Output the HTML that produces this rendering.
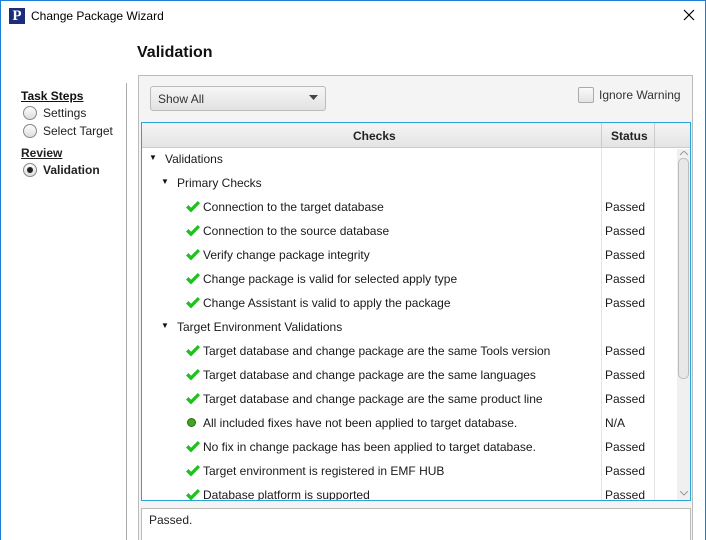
<!DOCTYPE html>
<html><head><meta charset="utf-8"><style>
*{margin:0;padding:0;box-sizing:border-box}
html,body{width:706px;height:540px;overflow:hidden}
body{background:#fff;font-family:"Liberation Sans",sans-serif;position:relative;color:#222}
.a{position:absolute}
.t{font-size:12px;white-space:nowrap}
.row{position:absolute;height:24px;line-height:24px;font-size:12px;white-space:nowrap;color:#1a1a1a}
.st{position:absolute;left:605px;font-size:12px;line-height:24px;color:#1a1a1a}
.radio{position:absolute;width:14px;height:14px;border:1px solid #888;border-radius:50%;background:linear-gradient(#fdfdfd,#ddd)}
.tri{position:absolute;font-size:8px;line-height:24px;color:#111}
</style></head><body>
<div class="a" style="left:0;top:0;width:706px;height:540px;border:1px solid #1c7fd6;border-bottom:none"></div>
<div class="a" style="left:9px;top:8px;width:16px;height:16px;background:#1b2d7a;color:#fff;font-family:'Liberation Serif',serif;font-weight:bold;font-size:15px;line-height:16px;text-align:center">P</div>
<div class="a t" style="left:31px;top:9px;font-size:12px;color:#000">Change Package Wizard</div>
<svg class="a" style="left:683px;top:9px" width="12" height="12"><path d="M1 1L11 11M11 1L1 11" stroke="#000" stroke-width="1.2"/></svg>
<div class="a" style="left:137px;top:44px;font-weight:bold;font-size:16px;color:#111">Validation</div>
<div class="a t" style="left:21px;top:89px;font-weight:bold;text-decoration:underline;font-size:12px;color:#111">Task Steps</div>
<div class="radio" style="left:23px;top:106px"></div><div class="a t" style="left:43px;top:106px">Settings</div>
<div class="radio" style="left:23px;top:124px"></div><div class="a t" style="left:43px;top:124px">Select Target</div>
<div class="a t" style="left:21px;top:146px;font-weight:bold;text-decoration:underline">Review</div>
<div class="radio" style="left:23px;top:163px"><div class="a" style="left:3px;top:3px;width:6px;height:6px;border-radius:50%;background:#222"></div></div>
<div class="a t" style="left:43px;top:163px;font-weight:bold">Validation</div>
<div class="a" style="left:126px;top:83px;width:1px;height:457px;background:#aaa"></div>
<div class="a" style="left:138px;top:75px;width:555px;height:470px;background:#f4f4f4;border:1px solid #bbb"></div>
<div class="a" style="left:150px;top:86px;width:176px;height:25px;border:1px solid #bbb;border-radius:3px;background:linear-gradient(#f6f6f6,#e2e2e2)"></div>
<div class="a t" style="left:158px;top:92px;color:#333">Show All</div>
<svg class="a" style="left:309px;top:95px" width="9" height="5"><path d="M0 0H9L4.5 5Z" fill="#444"/></svg>
<div class="a" style="left:578px;top:87px;width:16px;height:16px;border:1px solid #aaa;border-radius:2px;background:linear-gradient(#fafafa,#e4e4e4)"></div>
<div class="a t" style="left:599px;top:88px;color:#333">Ignore Warning</div>
<div class="a" style="left:141px;top:122px;width:550px;height:379px;border:1px solid #2aa3d8;background:#fff;overflow:hidden">
 <div class="a" style="left:0;top:0;width:548px;height:25px;background:linear-gradient(#f4f4f4,#e4e4e4);border-bottom:1px solid #ccc"></div>
 <div class="a t" style="left:211px;top:6px;font-weight:bold">Checks</div>
 <div class="a t" style="left:469px;top:6px;font-weight:bold">Status</div>
 <div class="a" style="left:459px;top:0;width:1px;height:379px;background:#e4e4e4"></div>
 <div class="a" style="left:512px;top:0;width:1px;height:379px;background:#e4e4e4"></div>
 <div class="a" style="left:459px;top:0;width:1px;height:25px;background:#ccc"></div>
 <div class="a" style="left:512px;top:0;width:1px;height:25px;background:#ccc"></div>
 <div class="a" style="left:535px;top:26px;width:13px;height:352px;background:#f0f0f0"></div>
 <div class="a" style="left:536px;top:35px;width:11px;height:221px;border:1px solid #bbb;border-radius:5px;background:#e8e8e8"></div>
 <svg class="a" style="left:538px;top:28px" width="8" height="5"><path d="M0 4L4 0L8 4" stroke="#999" fill="none"/></svg>
 <svg class="a" style="left:538px;top:368px" width="8" height="5"><path d="M0 0L4 4L8 0" stroke="#999" fill="none"/></svg>
</div>
<svg width="0" height="0" style="position:absolute"><defs><symbol id="ck" viewBox="0 0 14 12"><path d="M0 6.5L2.5 4L5 6.8L11.8 0L14 2.2L5 11.5Z" fill="#1ec21e"/></symbol></defs></svg>
<div class="tri" style="left:149px;top:146px">▼</div><div class="row" style="left:165px;top:147px">Validations</div>
<div class="tri" style="left:161px;top:170px">▼</div><div class="row" style="left:177px;top:171px">Primary Checks</div>
<div class="tri" style="left:161px;top:314px">▼</div><div class="row" style="left:177px;top:315px">Target Environment Validations</div>
<svg class="a" style="left:186px;top:201px" width="14" height="12"><use href="#ck"/></svg><div class="row" style="left:203px;top:195px">Connection to the target database</div><div class="st" style="top:195px">Passed</div>
<svg class="a" style="left:186px;top:225px" width="14" height="12"><use href="#ck"/></svg><div class="row" style="left:203px;top:219px">Connection to the source database</div><div class="st" style="top:219px">Passed</div>
<svg class="a" style="left:186px;top:249px" width="14" height="12"><use href="#ck"/></svg><div class="row" style="left:203px;top:243px">Verify change package integrity</div><div class="st" style="top:243px">Passed</div>
<svg class="a" style="left:186px;top:273px" width="14" height="12"><use href="#ck"/></svg><div class="row" style="left:203px;top:267px">Change package is valid for selected apply type</div><div class="st" style="top:267px">Passed</div>
<svg class="a" style="left:186px;top:297px" width="14" height="12"><use href="#ck"/></svg><div class="row" style="left:203px;top:291px">Change Assistant is valid to apply the package</div><div class="st" style="top:291px">Passed</div>
<svg class="a" style="left:186px;top:345px" width="14" height="12"><use href="#ck"/></svg><div class="row" style="left:203px;top:339px">Target database and change package are the same Tools version</div><div class="st" style="top:339px">Passed</div>
<svg class="a" style="left:186px;top:369px" width="14" height="12"><use href="#ck"/></svg><div class="row" style="left:203px;top:363px">Target database and change package are the same languages</div><div class="st" style="top:363px">Passed</div>
<svg class="a" style="left:186px;top:393px" width="14" height="12"><use href="#ck"/></svg><div class="row" style="left:203px;top:387px">Target database and change package are the same product line</div><div class="st" style="top:387px">Passed</div>
<div class="a" style="left:187px;top:418px;width:9px;height:9px;border-radius:50%;background:#3da81e;border:1px solid #2a6a10"></div><div class="row" style="left:203px;top:411px">All included fixes have not been applied to target database.</div><div class="st" style="top:411px">N/A</div>
<svg class="a" style="left:186px;top:441px" width="14" height="12"><use href="#ck"/></svg><div class="row" style="left:203px;top:435px">No fix in change package has been applied to target database.</div><div class="st" style="top:435px">Passed</div>
<svg class="a" style="left:186px;top:465px" width="14" height="12"><use href="#ck"/></svg><div class="row" style="left:203px;top:459px">Target environment is registered in EMF HUB</div><div class="st" style="top:459px">Passed</div>
<div class="a" style="left:142px;top:483px;width:459px;height:17px;overflow:hidden">
<svg class="a" style="left:44px;top:6px" width="14" height="12"><use href="#ck"/></svg><div class="row" style="left:61px;top:0px">Database platform is supported</div></div>
<div class="a" style="left:601px;top:483px;width:52px;height:17px;overflow:hidden"><div class="st" style="left:4px;top:0">Passed</div></div>
<div class="a" style="left:141px;top:508px;width:550px;height:40px;background:#fff;border:1px solid #bbb"></div>
<div class="a t" style="left:149px;top:513px">Passed.</div>
</body></html>
